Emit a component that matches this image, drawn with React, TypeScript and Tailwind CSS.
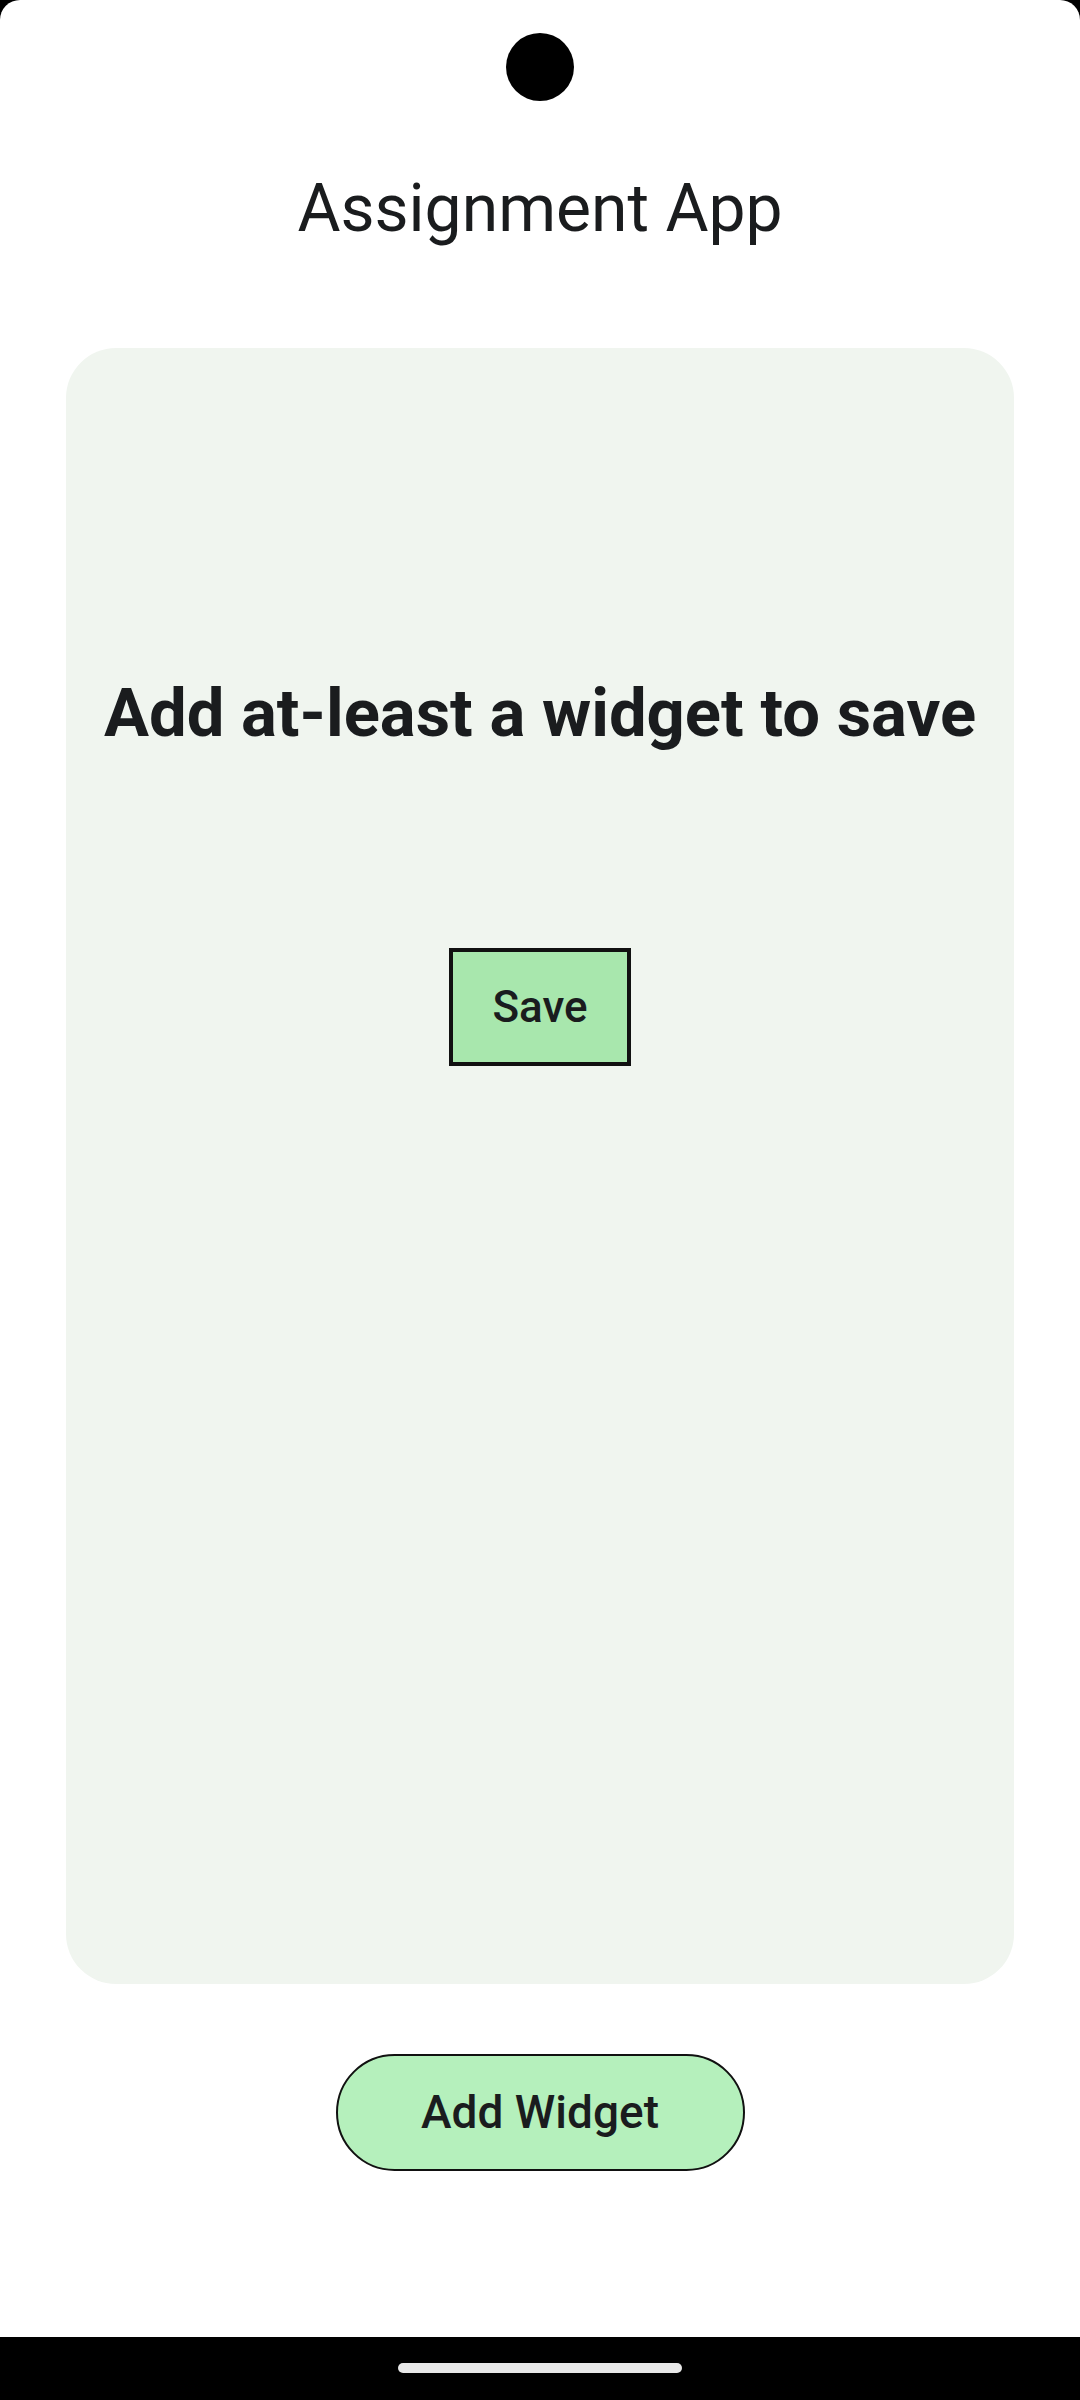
export default function App() {
  return (
    <div
      className="relative flex h-[2400px] w-[1080px] flex-col bg-black"
      style={{ fontFamily: "Roboto, 'Noto Sans', sans-serif" }}
    >
      <div className="flex flex-1 flex-col items-center rounded-t-[20px] bg-white">
        <h1 className="mt-[169px] text-[66px] font-normal leading-[80px] text-[#1a1c1e]">
          Assignment App
        </h1>
        <div className="mt-[99px] flex h-[1636px] w-[948px] flex-col items-center rounded-[50px] bg-[#f0f5ef] pt-[325px]">
          <h2 className="text-[67px] font-bold leading-[80px] text-[#1a1c1e]">
            Add at-least a widget to save
          </h2>
          <button className="mt-[195px] flex h-[118px] w-[182px] items-center justify-center border-[4px] border-[#111] bg-[#a8e7ad] text-[44px] font-medium text-[#1a1c1e]">
            Save
          </button>
        </div>
        <button className="mt-[70px] flex h-[117px] w-[409px] items-center justify-center rounded-full border-[2px] border-[#111] bg-[#b5f0bc] text-[46px] font-medium text-[#1a1c1e]">
          Add Widget
        </button>
      </div>
      <div className="flex h-[63px] w-full items-start justify-center bg-black pt-[26px]">
        <div className="h-[10px] w-[284px] rounded-full bg-[#e8e8e8]" />
      </div>
      <div className="absolute left-[506px] top-[33px] h-[68px] w-[68px] rounded-full bg-black" />
    </div>
  );
}
